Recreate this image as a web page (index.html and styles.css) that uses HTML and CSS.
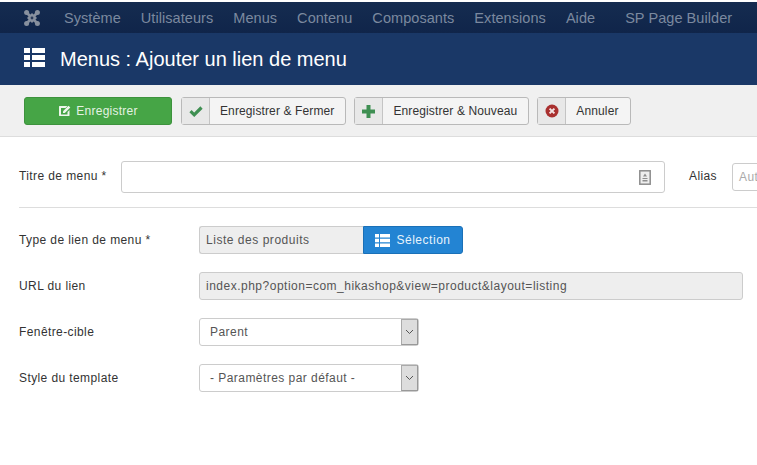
FILE: index.html
```html
<!DOCTYPE html>
<html lang="fr">
<head>
<meta charset="utf-8">
<title>Menus : Ajouter un lien de menu</title>
<link rel="stylesheet" href="styles.css">
</head>
<body>
<nav class="nav">
  <svg class="logo" viewBox="0 0 16 16" width="16" height="16"><g fill="#87909e"><circle cx="2.600" cy="2.600" r="2.500"/><circle cx="13.400" cy="2.600" r="2.500"/><circle cx="2.600" cy="13.400" r="2.500"/><circle cx="13.400" cy="13.400" r="2.500"/></g><path d="M3 3 13 13M13 3 3 13" stroke="#87909e" stroke-width="2.800" fill="none"/><path d="M8 3 13 8 8 13 3 8z" fill="#87909e"/><circle cx="8" cy="8" r="1.400" fill="#2a3b59"/></svg>
  <a class="nav-item">Système</a>
  <a class="nav-item">Utilisateurs</a>
  <a class="nav-item">Menus</a>
  <a class="nav-item">Contenu</a>
  <a class="nav-item">Composants</a>
  <a class="nav-item">Extensions</a>
  <a class="nav-item">Aide</a>
  <a class="nav-item nav-sp">SP Page Builder</a>
</nav>
<header class="title-bar">
  <svg class="title-icon" viewBox="0 0 21 20" width="21" height="20"><path d="M0 0h6v5H0zM8 0h13v5H8zM0 7h6v5H0zM8 7h13v5H8zM0 14h6v5H0zM8 14h13v5H8z" fill="#fff"/></svg>
  <h1 class="title">Menus : Ajouter un lien de menu</h1>
</header>
<div class="toolbar">
  <button class="btn btn-save">
    <svg viewBox="0 0 13 12" width="13" height="12"><path d="M1.500 1h8L7.500 3H3v6.500h6.500V7l2-2v5.500a.7.7 0 0 1-.7.5H1.500a.7.7 0 0 1-.5-.5V1.500a.7.7 0 0 1 .5-.5z" fill="#eef6ec"/><path d="M5 6.200 10.500.7 12.300 2.500 6.800 8H5z" fill="#eef6ec"/></svg>
    Enregistrer
  </button>
  <button class="btn btn-split"><span class="btn-ico"><svg viewBox="0 0 14 12" width="14" height="12"><path d="M1.500 6.200 5.200 9.800 12.500 2.500" fill="none" stroke="#3f8f52" stroke-width="3.200"/></svg></span><span class="btn-text">Enregistrer &amp; Fermer</span></button>
  <button class="btn btn-split"><span class="btn-ico"><svg viewBox="0 0 13 13" width="13" height="13"><path d="M4.500 0h4v4.500H13v4H8.500V13h-4V8.500H0v-4h4.500z" fill="#3f8f52"/></svg></span><span class="btn-text">Enregistrer &amp; Nouveau</span></button>
  <button class="btn btn-split"><span class="btn-ico"><svg viewBox="0 0 14 14" width="14" height="14"><circle cx="7" cy="7" r="6.500" fill="#a9302f"/><path d="M4.600 4.600 9.400 9.400M9.400 4.600 4.600 9.400" stroke="#f3e3e3" stroke-width="2"/></svg></span><span class="btn-text">Annuler</span></button>
</div>
<main class="form">
  <div class="title-row">
    <label class="lbl lbl-title">Titre de menu *</label>
    <div class="input title-input">
      <svg viewBox="0 0 12 15" width="12" height="15"><rect x=".8" y=".8" width="10.400" height="13.400" fill="#eee" stroke="#8d8d8d" stroke-width="1.500"/><path d="M6 3.500 8 6.500H4z M3.500 8h5v1h-5zM3.500 10h5v1.500h-5z" fill="#8d8d8d"/></svg>
    </div>
    <label class="lbl lbl-alias">Alias</label>
    <div class="input alias-input">Aut</div>
  </div>
  <hr class="sep">
  <div class="row">
    <label class="lbl lbl-field">Type de lien de menu *</label>
    <div class="picker">
      <span class="picker-value">Liste des produits</span>
      <button class="picker-btn"><svg viewBox="0 0 15 13" width="15" height="13"><path d="M0 0h4v3.500H0zM5 0h10v3.500H5zM0 4.700h4v3.500H0zM5 4.700h10v3.500H5zM0 9.400h4V13H0zM5 9.400h10V13H5z" fill="#fff"/></svg>Sélection</button>
    </div>
  </div>
  <div class="row">
    <label class="lbl lbl-field">URL du lien</label>
    <div class="url">index.php?option=com_hikashop&amp;view=product&amp;layout=listing</div>
  </div>
  <div class="row">
    <label class="lbl lbl-field">Fenêtre-cible</label>
    <div class="select"><span class="select-text">Parent</span><span class="select-arrow"><svg viewBox="0 0 9 6" width="9" height="6"><path d="M1 1 4.500 4.500 8 1" fill="none" stroke="#555" stroke-width="1"/></svg></span></div>
  </div>
  <div class="row">
    <label class="lbl lbl-field">Style du template</label>
    <div class="select"><span class="select-text">- Paramètres par défaut -</span><span class="select-arrow"><svg viewBox="0 0 9 6" width="9" height="6"><path d="M1 1 4.500 4.500 8 1" fill="none" stroke="#555" stroke-width="1"/></svg></span></div>
  </div>
</main>
</body>
</html>
```
FILE: styles.css
```css
* { box-sizing: border-box; }
html, body { margin: 0; padding: 0; }
body {
  width: 757px;
  height: 465px;
  overflow: hidden;
  background: #fff;
  color: #333;
  font: 12px "Liberation Sans", Arial, sans-serif;
  letter-spacing: .4px;
  padding-top: 2px;
}
.nav {
  height: 31px;
  background: linear-gradient(#152c50, #10254a);
  display: flex;
  align-items: center;
  padding-left: 24px;
  white-space: nowrap;
}
.logo { margin-right: 24px; }
.nav-item {
  color: #7b899f;
  font-size: 14.5px;
  letter-spacing: .06px;
  margin-right: 20px;
}
.nav-sp { margin-left: 10px; }
.title-bar {
  height: 52px;
  background: #1a3867;
  display: flex;
  align-items: center;
  padding-left: 24px;
}
.title-icon { margin-right: 15px; margin-top: -3px; }
.title {
  margin: 0;
  color: #fff;
  font-size: 20px;
  font-weight: 400;
  letter-spacing: 0;
}
.toolbar {
  height: 52px;
  background: #f0f0f0;
  border-bottom: 1px solid #ddd;
  display: flex;
  align-items: flex-start;
  gap: 8px;
  padding: 12px 0 0 24px;
}
.btn-save + .btn { margin-left: 1px; }
.btn {
  height: 28px;
  padding: 0;
  border-radius: 3px;
  font: inherit;
  letter-spacing: .12px;
  display: flex;
  align-items: center;
}
.btn-save {
  width: 148px;
  justify-content: center;
  gap: 5px;
  background: #46a546;
  border: 1px solid #3d923d;
  color: #e4f2e2;
  letter-spacing: .25px;
}
.btn-split {
  background: #f4f4f4;
  border: 1px solid #b9b9b9;
  color: #333;
}
.btn-ico {
  width: 28px;
  height: 26px;
  background: #e8e8e8;
  border-right: 1px solid #c4c4c4;
  display: flex;
  align-items: center;
  justify-content: center;
}
.btn-text { padding: 0 11px 0 10px; }
.form { padding: 24px 0 0 19px; }
.title-row {
  display: flex;
  align-items: flex-start;
  height: 32px;
  white-space: nowrap;
}
.lbl { color: #333; }
.lbl-title { width: 102px; flex: none; line-height: 30px; }
.input {
  background: #fff;
  border: 1px solid #ccc;
  border-radius: 3px;
}
.title-input {
  width: 544px;
  height: 32px;
  flex: none;
  display: flex;
  align-items: center;
  justify-content: flex-end;
  padding-right: 13px;
}
.lbl-alias { margin-left: 24px; width: 43px; flex: none; line-height: 30px; }
.alias-input {
  width: 60px;
  height: 28px;
  margin-top: 2px;
  line-height: 26px;
  padding-left: 6px;
  color: #aaa;
  flex: none;
  overflow: hidden;
}
.sep {
  margin: 14px 0 18px;
  border: 0;
  border-top: 1px solid #ddd;
}
.row {
  display: flex;
  align-items: center;
  height: 28px;
  margin-bottom: 18px;
}
.lbl-field { width: 180px; }
.picker { display: flex; letter-spacing: .53px; }
.picker-value {
  width: 164px;
  height: 28px;
  line-height: 26px;
  padding-left: 6px;
  background: #eee;
  border: 1px solid #ccc;
  border-right: 0;
  border-radius: 3px 0 0 3px;
  color: #555;
}
.picker-btn {
  width: 100px;
  height: 28px;
  padding: 0;
  display: flex;
  align-items: center;
  justify-content: center;
  gap: 6px;
  background: #2384d3;
  border: 1px solid #1a70b7;
  border-radius: 0 3px 3px 0;
  color: #e6f3fc;
  font: inherit;
  letter-spacing: inherit;
}
.url {
  width: 544px;
  height: 28px;
  line-height: 26px;
  padding-left: 6px;
  background: #eee;
  border: 1px solid #ccc;
  border-radius: 3px;
  color: #555;
  letter-spacing: .5px;
}
.select {
  width: 220px;
  height: 28px;
  display: flex;
  background: #fff;
  border: 1px solid #ccc;
  border-radius: 3px;
  letter-spacing: .45px;
}
.select-text { flex: 1; line-height: 26px; padding-left: 10px; color: #555; }
.select-arrow {
  width: 17px;
  background: #ddd;
  border: 1px solid #aaa;
  border-right-color: #999;
  border-bottom-color: #999;
  display: flex;
  align-items: center;
  justify-content: center;
}
```
